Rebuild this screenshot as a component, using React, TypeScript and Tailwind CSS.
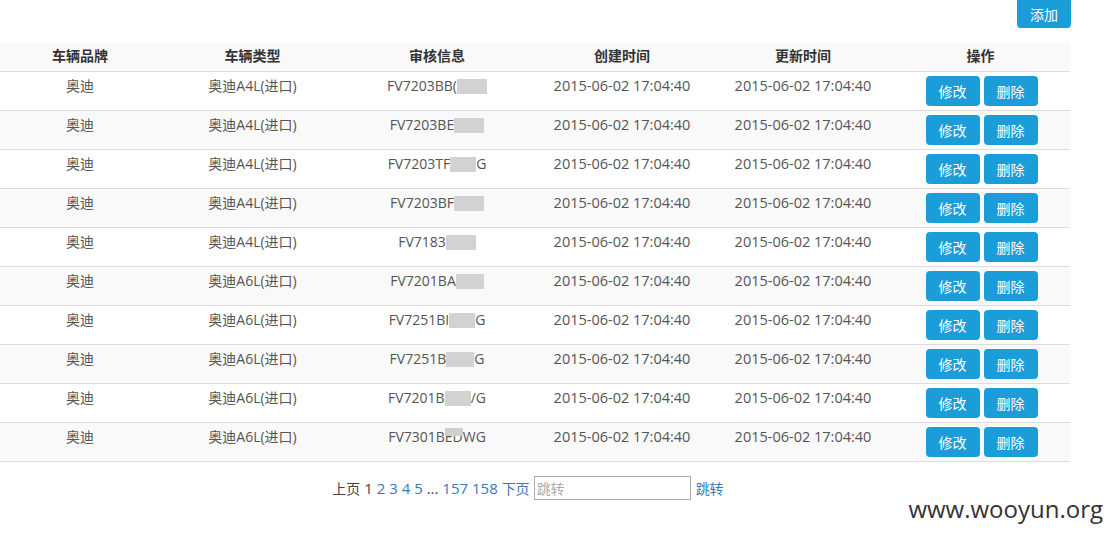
import React from "react";

type Row = { model: string; pre: string; blur: number; post: string; last?: boolean };

const rows: Row[] = [
  { model: "奥迪A4L(进口)", pre: "FV7203BB(", blur: 30, post: "" },
  { model: "奥迪A4L(进口)", pre: "FV7203BE", blur: 30, post: "" },
  { model: "奥迪A4L(进口)", pre: "FV7203TF", blur: 26, post: "G" },
  { model: "奥迪A4L(进口)", pre: "FV7203BF", blur: 30, post: "" },
  { model: "奥迪A4L(进口)", pre: "FV7183", blur: 30, post: "" },
  { model: "奥迪A6L(进口)", pre: "FV7201BA", blur: 28, post: "" },
  { model: "奥迪A6L(进口)", pre: "FV7251BI", blur: 26, post: "G" },
  { model: "奥迪A6L(进口)", pre: "FV7251B", blur: 28, post: "G" },
  { model: "奥迪A6L(进口)", pre: "FV7201B", blur: 26, post: "/G" },
  { model: "奥迪A6L(进口)", pre: "FV7301B", blur: 0, post: "WG", last: true },
];

const font = { fontFamily: '"Open Sans","Noto Sans CJK SC",sans-serif' };

export default function App() {
  return (
    <div className="relative w-[1112px] h-[539px] bg-white text-[14px] text-[#555] overflow-hidden" style={font}>
      <div className="flex justify-end pr-[41px]">
        <button className="w-[54px] h-[28px] bg-[#1b9dd9] text-white text-[14px] rounded-b-[4px] flex items-center justify-center">
          添加
        </button>
      </div>
      <div className="mt-[15px] w-[1070px]">
        <div className="grid grid-cols-[160px_185px_184px_186px_176px_179px] h-[29px] pb-[3px] bg-[#f9f9f9] border-b border-[#dddddd] items-center text-center font-bold text-[#333]">
          <div>车辆品牌</div>
          <div>车辆类型</div>
          <div>审核信息</div>
          <div>创建时间</div>
          <div>更新时间</div>
          <div>操作</div>
        </div>
        {rows.map((r, i) => (
          <div
            key={i}
            className={`grid grid-cols-[160px_185px_184px_186px_176px_179px] h-[39px] border-b border-[#dddddd] text-center ${i % 2 === 1 ? "bg-[#f9f9f9]" : "bg-white"}`}
          >
            <div className="pt-[4px] leading-[20px]">奥迪</div>
            <div className="pt-[4px] leading-[20px]">{r.model}</div>
            <div className="pt-[4px] leading-[20px] flex justify-center items-start">
              <span>{r.pre}</span>
              {r.last ? (
                <span className="relative">
                  ED
                  <span className="absolute left-0 right-0 top-[1px] h-[8px] bg-[#cfcfcf]" />
                </span>
              ) : (
                <span className="relative inline-block h-[20px]" style={{ width: r.blur }}>
                  <span className="absolute inset-x-0 top-[3px] h-[15px] bg-[#d2d2d2]" />
                </span>
              )}
              <span>{r.post}</span>
            </div>
            <div className="pt-[4px] leading-[20px] text-[14.5px]">2015-06-02 17:04:40</div>
            <div className="pt-[4px] leading-[20px] text-[14.5px]">2015-06-02 17:04:40</div>
            <div className="pt-[4px] pl-[2px] flex justify-center gap-[4px]">
              <button className="w-[54px] h-[30px] bg-[#1b9dd9] text-white rounded-[4px] flex items-center justify-center">修改</button>
              <button className="w-[54px] h-[30px] bg-[#1b9dd9] text-white rounded-[4px] flex items-center justify-center">删除</button>
            </div>
          </div>
        ))}
        <div className="mt-[14px] flex justify-center items-center pr-[14px] text-[15px] h-[24px]">
          <span className="text-[#444] text-[14px]">上页</span>
          <span className="text-[#444] whitespace-pre"> 1 </span>
          <span className="text-[#3a7ab8] whitespace-pre">2 3 4 5 </span>
          <span className="text-[#444] whitespace-pre">... </span>
          <span className="text-[#3a7ab8] whitespace-pre">157 158 </span>
          <span className="text-[#3a7ab8] text-[14px] mr-[4px]">下页</span>
          <input
            className="w-[157px] h-[24px] border border-[#a9a9a9] px-[2px] text-[14px] placeholder:text-[#aaa] outline-none"
            placeholder="跳转"
          />
          <span className="ml-[5px] text-[#3a7ab8] text-[14px]">跳转</span>
        </div>
      </div>
      <div className="absolute right-[9px] top-[494px] text-[24px] text-[#333] leading-[30px]">www.wooyun.org</div>
    </div>
  );
}
